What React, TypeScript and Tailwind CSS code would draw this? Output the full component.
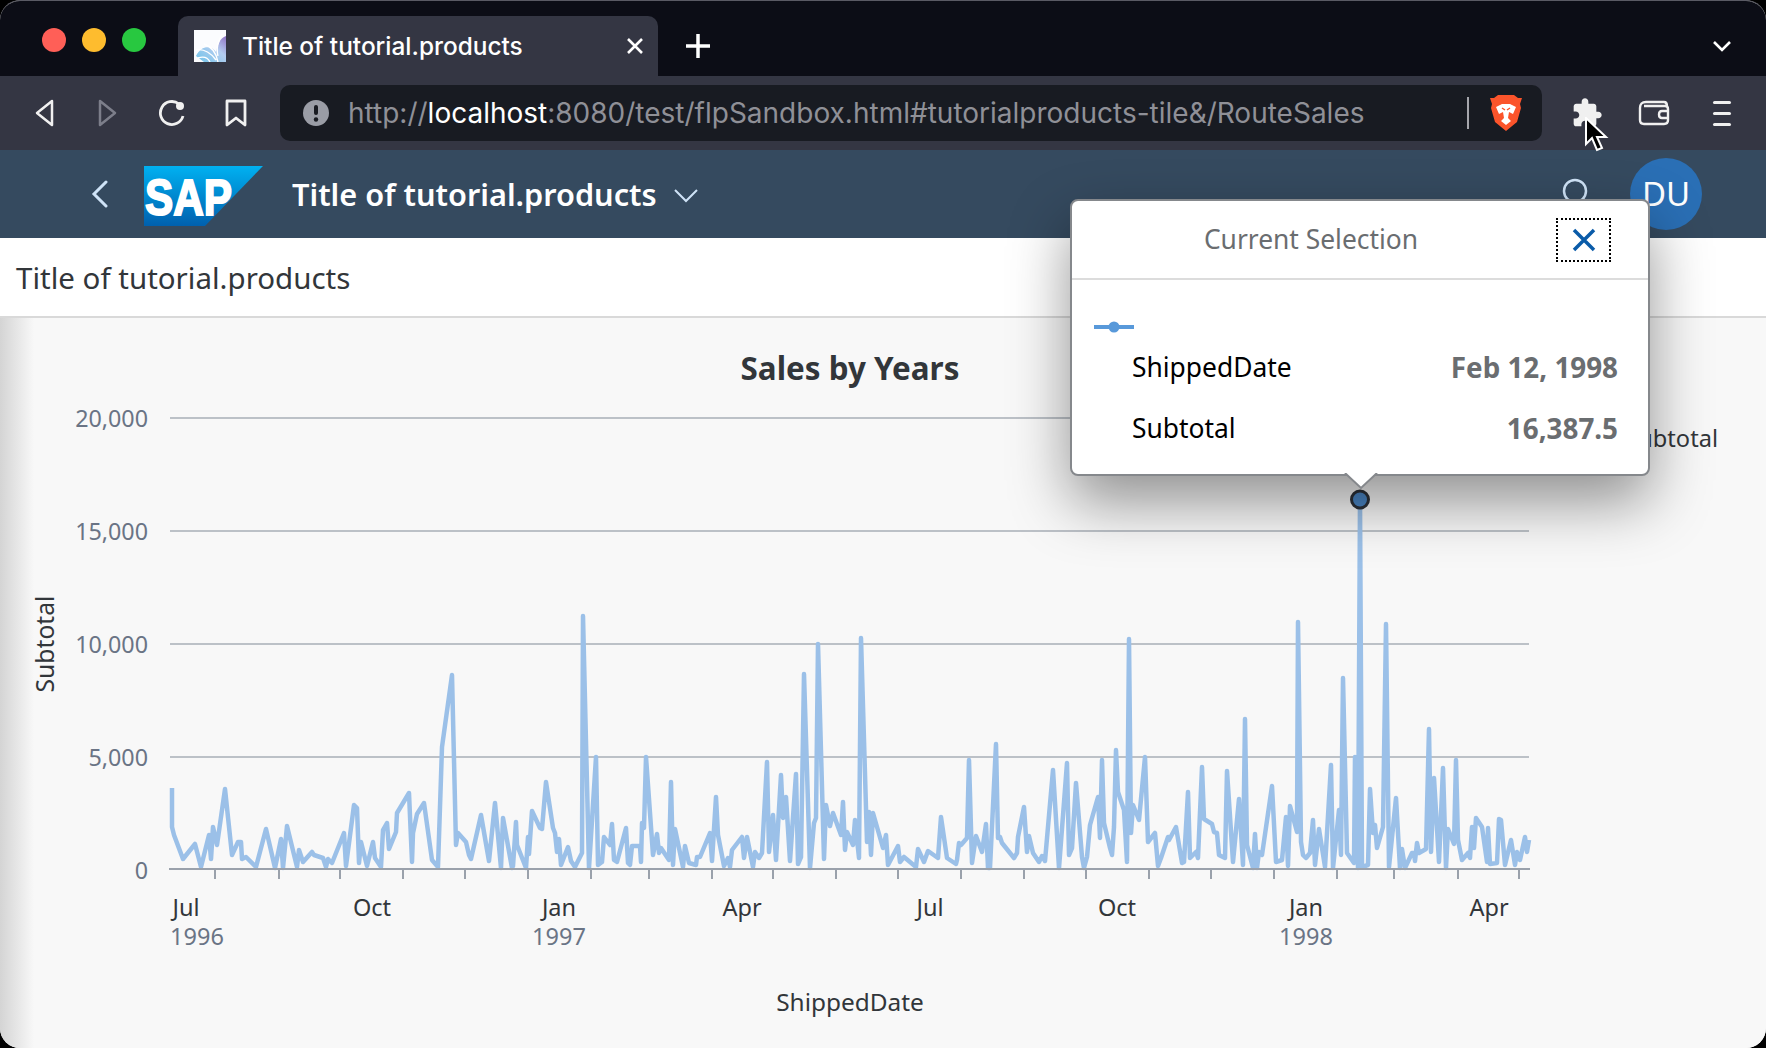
import React from 'react';

// traced line of the chart, in page pixels
const salesPoints: number[][] = [
  [172, 788], [172, 827], [174, 835], [183, 859], [195, 844], [201, 867], [209, 835], [211, 859], [213, 827], [217, 845], [225, 789], [232, 855], [238, 842], [241, 842], [242, 859], [246, 857], [256, 867], [266, 829], [275, 868], [281, 839], [283, 868], [287, 826], [297, 867], [299, 850], [303, 862], [312, 852], [314, 855], [323, 858], [326, 867], [328, 859], [332, 863], [344, 833], [346, 866], [354, 805], [357, 808], [359, 863], [361, 842], [367, 866], [373, 842], [375, 858], [381, 867], [383, 830], [387, 823], [389, 849], [396, 832], [397, 813], [409, 793], [412, 862], [413, 833], [417, 814], [424, 803], [432, 860], [438, 867], [442, 747], [452, 675], [456, 845], [458, 833], [466, 842], [469, 855], [471, 859], [481, 815], [489, 861], [495, 803], [501, 868], [503, 818], [512, 868], [513, 866], [516, 822], [517, 845], [526, 868], [528, 837], [529, 854], [532, 811], [540, 828], [542, 829], [546, 782], [553, 828], [555, 833], [557, 852], [559, 839], [561, 865], [568, 847], [571, 861], [575, 867], [582, 853], [583, 616], [589, 868], [596, 757], [598, 865], [602, 862], [604, 837], [610, 845], [612, 824], [614, 860], [617, 862], [626, 828], [628, 863], [630, 865], [632, 846], [640, 846], [641, 862], [642, 823], [644, 828], [646, 757], [653, 855], [657, 834], [659, 853], [661, 848], [669, 860], [671, 782], [673, 865], [675, 829], [683, 867], [685, 846], [689, 863], [696, 865], [697, 857], [700, 857], [710, 833], [712, 861], [716, 797], [718, 835], [724, 866], [728, 858], [730, 867], [732, 850], [742, 837], [744, 858], [747, 837], [753, 867], [755, 852], [759, 858], [762, 853], [767, 762], [769, 852], [773, 815], [776, 860], [781, 775], [783, 818], [786, 797], [790, 861], [796, 774], [798, 864], [801, 857], [804, 674], [810, 868], [814, 823], [816, 818], [818, 644], [824, 859], [826, 805], [830, 826], [833, 813], [841, 835], [843, 802], [845, 850], [847, 832], [853, 845], [855, 820], [859, 858], [861, 638], [867, 842], [869, 812], [871, 855], [873, 813], [883, 848], [886, 835], [888, 865], [898, 846], [900, 862], [904, 857], [916, 867], [918, 849], [924, 862], [928, 851], [938, 858], [941, 817], [947, 858], [956, 864], [957, 860], [959, 843], [961, 845], [967, 838], [969, 760], [972, 863], [976, 836], [982, 852], [986, 824], [988, 868], [990, 868], [996, 744], [998, 838], [1000, 837], [1002, 843], [1014, 858], [1017, 853], [1018, 837], [1024, 807], [1027, 852], [1029, 836], [1033, 853], [1039, 862], [1042, 856], [1045, 861], [1053, 770], [1059, 868], [1067, 763], [1069, 855], [1072, 848], [1076, 783], [1082, 857], [1084, 868], [1087, 857], [1090, 825], [1098, 797], [1100, 838], [1102, 760], [1104, 823], [1110, 848], [1112, 855], [1114, 827], [1116, 750], [1118, 792], [1124, 810], [1127, 862], [1129, 639], [1131, 833], [1133, 805], [1139, 820], [1145, 757], [1148, 842], [1155, 833], [1158, 866], [1161, 858], [1168, 837], [1169, 840], [1176, 827], [1182, 863], [1184, 862], [1188, 792], [1190, 858], [1196, 852], [1198, 858], [1202, 767], [1204, 819], [1212, 824], [1214, 832], [1217, 833], [1219, 855], [1225, 858], [1227, 771], [1233, 862], [1239, 799], [1243, 865], [1245, 719], [1247, 845], [1253, 868], [1255, 834], [1257, 868], [1259, 852], [1262, 855], [1272, 786], [1276, 862], [1282, 860], [1286, 817], [1288, 866], [1290, 806], [1297, 832], [1298, 622], [1301, 842], [1303, 855], [1306, 858], [1310, 853], [1313, 820], [1315, 865], [1319, 829], [1325, 867], [1331, 765], [1333, 868], [1339, 810], [1341, 855], [1343, 678], [1347, 853], [1354, 863], [1355, 757], [1358, 868], [1360, 499], [1362, 867], [1368, 865], [1370, 789], [1373, 833], [1375, 825], [1377, 848], [1383, 827], [1386, 624], [1389, 867], [1396, 798], [1400, 868], [1402, 849], [1405, 868], [1412, 853], [1414, 853], [1415, 861], [1417, 843], [1419, 853], [1426, 849], [1429, 729], [1431, 852], [1434, 778], [1439, 862], [1443, 768], [1446, 868], [1448, 829], [1454, 844], [1456, 760], [1458, 840], [1462, 860], [1468, 853], [1470, 858], [1472, 827], [1474, 848], [1476, 818], [1482, 827], [1487, 862], [1488, 828], [1490, 864], [1497, 863], [1499, 819], [1501, 820], [1505, 865], [1511, 840], [1515, 865], [1517, 852], [1520, 860], [1525, 837], [1527, 852], [1529, 840],
];

const gridLines = [
  { y: 418, label: '20,000' },
  { y: 531, label: '15,000' },
  { y: 644, label: '10,000' },
  { y: 757, label: '5,000' },
];

const ticks = [215, 279, 340, 403, 465, 528, 591, 649, 712, 773, 836, 898, 961, 1024, 1086, 1149, 1211, 1274, 1337, 1394, 1458, 1519];

const months = [
  { x: 186, m: 'Jul', y: '1996' },
  { x: 372, m: 'Oct' },
  { x: 559, m: 'Jan', y: '1997' },
  { x: 742, m: 'Apr' },
  { x: 930, m: 'Jul' },
  { x: 1117, m: 'Oct' },
  { x: 1306, m: 'Jan', y: '1998' },
  { x: 1489, m: 'Apr' },
];

const SalesChart = () => (
  <svg width="1766" height="730" viewBox="0 318 1766 730" className="block font-['Noto_Sans']">
    <text x="850" y="380" textAnchor="middle" className="text-[31.4px] font-bold fill-[#32363a]">Sales by Years</text>
    <text x="1718" y="447" textAnchor="end" className="text-[23.6px] fill-[#32363a]">Subtotal</text>
    <text transform="translate(54 644) rotate(-90)" textAnchor="middle" className="text-[24.7px] fill-[#32363a]">Subtotal</text>

    {gridLines.map((g) => (
      <g key={g.y}>
        <line x1="170" x2="1529" y1={g.y} y2={g.y} stroke="#a9afb7" strokeWidth="1.5" />
        <text x="148" y={g.y + 9} textAnchor="end" className="text-[23.3px] fill-[#6a7485]">{g.label}</text>
      </g>
    ))}
    <text x="148" y="879" textAnchor="end" className="text-[23.3px] fill-[#6a7485]">0</text>

    <polyline
      points={salesPoints.map((p) => p.join(',')).join(' ')}
      fill="none"
      stroke="#9bc0e8"
      strokeWidth="4.5"
      strokeLinejoin="round"
    />

    <line x1="169" x2="1530" y1="869" y2="869" stroke="#9aa1ab" strokeWidth="2" />
    {ticks.map((x) => (
      <line key={x} x1={x} x2={x} y1="869" y2="879" stroke="#9aa1ab" strokeWidth="2" />
    ))}
    {months.map((t) => (
      <g key={t.x}>
        <text x={t.x} y="916" textAnchor="middle" className="text-[23.5px] fill-[#32363a]">{t.m}</text>
        {t.y && <text x={t.y === '1996' ? 197 : t.x} y="945" textAnchor="middle" className="text-[23.5px] fill-[#6a7485]">{t.y}</text>}
      </g>
    ))}
    <text x="850" y="1011" textAnchor="middle" className="text-[24.4px] fill-[#32363a]">ShippedDate</text>

    <circle cx="1360" cy="499.5" r="8.5" fill="#4a86c5" stroke="#2c3138" strokeWidth="3" />
  </svg>
);

const Favicon = () => (
  <svg width="32" height="32" viewBox="0 0 32 32" className="shrink-0">
    <defs>
      <linearGradient id="fav" x1="0" y1="1" x2="1" y2="0">
        <stop offset="0" stopColor="#6ec3e8" />
        <stop offset="0.6" stopColor="#b4cdf0" />
        <stop offset="1" stopColor="#8f72c4" />
      </linearGradient>
    </defs>
    <rect width="32" height="32" fill="#fbfcfe" />
    <path d="M2 26 C8 14 18 16 22 22 C24 14 26 8 32 6 V32 H10 Z" fill="url(#fav)" />
    <path d="M2 20 C10 18 18 24 22 30 M10 14 C16 16 22 22 24 32 M28 4 C24 12 22 18 24 26 M4 28 C10 26 14 28 16 32" fill="none" stroke="#fff" strokeWidth="1.4" />
  </svg>
);

const SapLogo = () => (
  <svg width="119" height="60" viewBox="0 0 119 60" className="shrink-0">
    <defs>
      <linearGradient id="sap" x1="0" y1="0" x2="0" y2="1">
        <stop offset="0" stopColor="#00b1f1" />
        <stop offset="1" stopColor="#0060ae" />
      </linearGradient>
    </defs>
    <polygon points="0,0 119,0 61,60 0,60" fill="url(#sap)" />
    <text x="1" y="49" textLength="87" lengthAdjust="spacingAndGlyphs" className="font-['Liberation_Sans'] text-[50px] font-bold fill-white" stroke="#fff" strokeWidth="2">SAP</text>
  </svg>
);

const BraveLion = () => (
  <svg width="32" height="36" viewBox="0 0 32 36" className="shrink-0">
    <path d="M8 0 H24 L28 3 L32 3 L30 9 L31 13 L27 27 L16 36 L5 27 L1 13 L2 9 L0 3 L4 3 Z" fill="#fb542b" />
    <path d="M6 12 L12 9 H20 L26 12 L23 19 L19 17 L18 23 L21 26 L16 30 L11 26 L14 23 L13 17 L9 19 Z" fill="#fff" />
    <path d="M12 13 L15 15 M20 13 L17 15" stroke="#fb542b" strokeWidth="1.5" />
  </svg>
);

const AppHeader = () => (
  <div className="flex items-center h-[88px] bg-[#354a5f] text-white">
    <svg width="18" height="28" viewBox="0 0 18 28" className="ml-[91px]">
      <path d="M15 2 L3 14 L15 26" fill="none" stroke="#cfe3f7" strokeWidth="3" strokeLinecap="round" />
    </svg>
    <div className="ml-[35px] mt-[3px]"><SapLogo /></div>
    <span className="ml-[29px] text-[30.7px] font-semibold">Title of tutorial.products</span>
    <svg width="26" height="15" viewBox="0 0 26 15" className="ml-[16px] mt-0.5">
      <path d="M2 2 L13 13 L24 2" fill="none" stroke="#cfe3f7" strokeWidth="2" />
    </svg>
    <svg width="30" height="40" viewBox="0 0 30 40" className="ml-auto mt-1">
      <circle cx="14" cy="15" r="11" fill="none" stroke="#cfe3f7" strokeWidth="2.5" />
      <path d="M22 23 L30 31" stroke="#cfe3f7" strokeWidth="2.5" />
    </svg>
    <div className="ml-[39px] mr-[64px] flex h-[72px] w-[72px] items-center justify-center rounded-full bg-[#2a6fb5] text-[33px]">DU</div>
  </div>
);

const SelectionPopover = () => (
  <div className="absolute left-[1070px] top-[199px] w-[580px] h-[277px] rounded-lg border-2 border-[#85888c] bg-white text-[26.4px] shadow-[0_26px_60px_rgba(0,0,0,0.42)]">
    <div className="relative flex h-[79px] items-center justify-center border-b-2 border-[#dcdcdc] pr-[98px] text-[#6a6d70]">
      <span>Current Selection</span>
      <div className="absolute right-[37px] top-[17px] flex h-[44px] w-[55px] items-center justify-center border-2 border-dotted border-black">
        <svg width="24" height="24" viewBox="0 0 24 24">
          <path d="M2 2 L22 22 M22 2 L2 22" stroke="#0a5ba8" strokeWidth="3.5" />
        </svg>
      </div>
    </div>
    <svg width="40" height="12" viewBox="0 0 40 12" className="ml-[22px] mt-[41px] block">
      <rect y="4" width="40" height="4" fill="#5899da" />
      <circle cx="20" cy="6" r="5.5" fill="#5899da" />
    </svg>
    <div className="ml-[60px] mr-[30px] mt-[17px] flex flex-col gap-[25px] text-black">
      <div className="flex h-[36px] items-center justify-between">
        <span>ShippedDate</span>
        <span className="text-[27.8px] font-bold text-[#6a6d70]">Feb 12, 1998</span>
      </div>
      <div className="flex h-[36px] items-center justify-between">
        <span>Subtotal</span>
        <span className="text-[27.8px] font-bold text-[#6a6d70]">16,387.5</span>
      </div>
    </div>
    <svg width="34" height="17" viewBox="0 0 34 17" className="absolute left-[272px] -bottom-[16px]">
      <path d="M1 0 L17 15 L33 0" fill="#fff" stroke="#85888c" strokeWidth="2" />
    </svg>
  </div>
);

export default function App() {
  return (
    <div className="relative h-[1048px] w-[1766px] overflow-hidden bg-black font-['Noto_Sans',sans-serif]">
      <div className="flex h-full flex-col overflow-hidden rounded-[20px] border-t border-[#5a5a64] bg-[#f8f8f8]">
        {/* tab strip */}
        <div className="flex h-[75px] shrink-0 items-end bg-[#0c0d16] text-white font-['Inter']">
          <div className="mb-[24px] ml-[42px] mr-[32px] flex gap-[16px]">
            <span className="h-[24px] w-[24px] rounded-full bg-[#ff5f57]" />
            <span className="h-[24px] w-[24px] rounded-full bg-[#febc2e]" />
            <span className="h-[24px] w-[24px] rounded-full bg-[#28c840]" />
          </div>
          <div className="flex h-[60px] w-[480px] items-center rounded-t-[10px] bg-[#343643] pl-[16px] pr-[14px]">
            <Favicon />
            <span className="ml-[16px] text-[24.4px] font-medium">Title of tutorial.products</span>
            <svg width="18" height="18" viewBox="0 0 18 18" className="ml-auto">
              <path d="M2 2 L16 16 M16 2 L2 16" stroke="#fff" strokeWidth="2.6" />
            </svg>
          </div>
          <svg width="24" height="24" viewBox="0 0 24 24" className="mb-[18px] ml-[28px]">
            <path d="M12 0 V24 M0 12 H24" stroke="#fff" strokeWidth="3.5" strokeLinecap="round" />
          </svg>
          <svg width="20" height="12" viewBox="0 0 20 12" className="mb-[24px] ml-auto mr-[34px]">
            <path d="M2 2 L10 10 L18 2" fill="none" stroke="#fff" strokeWidth="2.6" />
          </svg>
        </div>

        {/* browser toolbar */}
        <div className="flex h-[74px] shrink-0 items-center bg-[#343643] font-['Inter']">
          <svg width="20" height="28" viewBox="0 0 20 28" className="ml-[34px]">
            <path d="M18 2 L3 14 L18 26 Z" fill="none" stroke="#f0f0f0" strokeWidth="2.5" strokeLinejoin="round" />
          </svg>
          <svg width="20" height="28" viewBox="0 0 20 28" className="ml-[44px]">
            <path d="M2 2 L17 14 L2 26 Z" fill="none" stroke="#7c7e8a" strokeWidth="2.5" strokeLinejoin="round" />
          </svg>
          <svg width="28" height="28" viewBox="0 0 28 28" className="ml-[40px]">
            <path d="M21 5 A11.5 11.5 0 1 0 25 17" fill="none" stroke="#f0f0f0" strokeWidth="2.8" />
            <circle cx="22" cy="7" r="4" fill="#f0f0f0" />
          </svg>
          <svg width="22" height="28" viewBox="0 0 22 28" className="ml-[39px]">
            <path d="M2 2 H20 V26 L11 19 L2 26 Z" fill="none" stroke="#f0f0f0" strokeWidth="2.8" strokeLinejoin="round" />
          </svg>
          <div className="ml-[33px] flex h-[56px] w-[1262px] items-center rounded-[10px] bg-[#181b22] pl-[23px] pr-[20px]">
            <svg width="26" height="26" viewBox="0 0 26 26" className="shrink-0">
              <circle cx="13" cy="13" r="13" fill="#9a9da6" />
              <rect x="11" y="5" width="4" height="10" rx="2" fill="#181b22" />
              <circle cx="13" cy="19.5" r="2.2" fill="#181b22" />
            </svg>
            <span className="ml-[19px] whitespace-nowrap text-[28px] text-[#8f9097]">
              http://<span className="text-white">localhost</span>:8080/test/flpSandbox.html#tutorialproducts-tile&amp;/RouteSales
            </span>
            <span className="ml-auto mr-[21px] h-[32px] w-[2px] bg-[#a5a6ac]" />
            <BraveLion />
          </div>
          <svg width="32" height="32" viewBox="0 0 24 24" className="ml-[29px]">
            <path fill="#f0f0f0" d="M20.5 11H19V7c0-1.1-.9-2-2-2h-4V3.5C13 2.12 11.88 1 10.5 1S8 2.12 8 3.5V5H4c-1.1 0-1.99.9-1.99 2v3.8H3.5c1.49 0 2.7 1.21 2.7 2.7s-1.21 2.7-2.7 2.7H2V20c0 1.1.9 2 2 2h3.8v-1.5c0-1.49 1.21-2.7 2.7-2.7 1.49 0 2.7 1.21 2.7 2.7V22H17c1.1 0 2-.9 2-2v-4h1.5c1.38 0 2.5-1.12 2.5-2.5S21.88 11 20.5 11z" />
          </svg>
          <svg width="32" height="26" viewBox="0 0 32 26" className="ml-[35px]">
            <path d="M2 8 C2 4 4 2 8 2 H26 C28 2 29 3 29 6 M2 8 V20 C2 23 4 24 6 24 H26 C29 24 30 22 30 20 V9 C30 7 29 6 27 6 H6" fill="none" stroke="#f0f0f0" strokeWidth="2.4" />
            <path d="M31 11 H24 C20 11 20 18 24 18 H31" fill="none" stroke="#f0f0f0" strokeWidth="2.4" />
          </svg>
          <div className="ml-[43px] flex w-[18px] flex-col gap-[8px]">
            <span className="h-[3px] rounded bg-[#f0f0f0]" />
            <span className="h-[3px] rounded bg-[#f0f0f0]" />
            <span className="h-[3px] rounded bg-[#f0f0f0]" />
          </div>
        </div>

        <AppHeader />

        <div className="flex h-[80px] shrink-0 items-center border-b-2 border-[#d9d9d9] bg-white pl-[16px] pt-[2px] text-[29.5px] text-[#32363a]">
          Title of tutorial.products
        </div>

        <div className="flex-1 bg-[linear-gradient(90deg,#d4d4d4_0px,#f8f8f8_34px)]">
          <SalesChart />
        </div>
      </div>

      <SelectionPopover />

      {/* mouse pointer */}
      <svg width="24" height="36" viewBox="0 0 24 36" className="absolute left-[1585px] top-[117px]">
        <path d="M1 1 V27 L7 21 L12 33 L17 31 L12 20 L21 20 Z" fill="#000" stroke="#fff" strokeWidth="2" />
      </svg>
    </div>
  );
}
